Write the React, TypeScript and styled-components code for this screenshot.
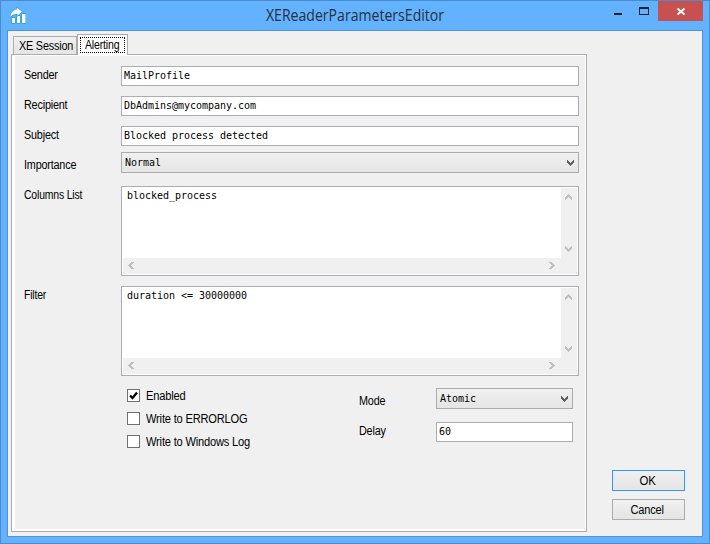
import React from "react";
import styled, { createGlobalStyle } from "styled-components";

const Global = createGlobalStyle`
  *, *::before, *::after { box-sizing: border-box; }
  html, body { margin: 0; padding: 0; overflow: hidden; }
  body { font-family: "Liberation Sans", Arial, sans-serif; font-size: 12px; color: #000; }
`;

const Window = styled.div`
  width: 710px;
  height: 544px;
  display: flex;
  flex-direction: column;
  background: #63b2ff;
  border: 1px solid #4b8bc9;
  padding: 0 6px 6px;
`;

const TitleBar = styled.header`
  height: 29px;
  flex: none;
  display: grid;
  grid-template-columns: 88px 1fr 88px;
  align-items: start;
`;

const AppIcon = styled.svg`
  display: block;
  margin: 6px 0 0 3px;
`;

const Title = styled.h1`
  margin: 0;
  text-align: center;
  font: 400 16px/29px "Open Sans", "Noto Sans", sans-serif;
  color: #23303c;
  white-space: nowrap;
  transform: scaleX(0.88);
`;

const WindowButtons = styled.div`
  display: grid;
  grid-template-columns: 24px 27px 45px;
  margin-left: -8px;
  width: 96px;
  height: 20px;
`;

const WindowButton = styled.button<{ $close?: boolean }>`
  border: 0;
  padding: 0;
  height: 20px;
  background: ${(p) => (p.$close ? "#c75050" : "transparent")};
  svg { display: block; margin: 0 auto; }
`;

const Client = styled.main`
  flex: 1;
  display: flex;
  background: #f0f0f0;
  border: 1px solid #4f94d8;
  padding: 3px 0 0 3px;
`;

const Tabs = styled.section`
  width: 576px;
`;

const TabStrip = styled.div`
  display: flex;
  align-items: flex-end;
  height: 20px;
  padding-left: 2px;
`;

const Tab = styled.button<{ $active?: boolean }>`
  font: inherit;
  display: flex;
  border: 1px solid #acacac;
  border-bottom: 0;
  padding: ${(p) => (p.$active ? "2px" : "0 0 0 5px")};
  width: ${(p) => (p.$active ? "51px" : "64px")};
  height: ${(p) => (p.$active ? "21px" : "18px")};
  margin-bottom: ${(p) => (p.$active ? "-1px" : "0")};
  background: ${(p) => (p.$active ? "#fff" : "linear-gradient(#f0f0f0, #e5e5e5)")};
  line-height: ${(p) => (p.$active ? "14px" : "18px")};
`;

const FocusRing = styled.span`
  display: flex;
  padding-left: 4px;
  width: 45px;
  height: 16px;
  border: 1px dotted #000;
`;

const TabPage = styled.div`
  height: 478px;
  background: #f0f0f0;
  border: 1px solid #acacac;
  box-shadow: inset 3px 0 #fff, inset -1px 0 #fff, inset 0 1px #fff, inset 0 -2px #fff;
  padding: 11px 7px 0 12px;
`;

const Row = styled.div<{ $gap: number; $h: number }>`
  display: grid;
  grid-template-columns: 97px 458px;
  height: ${(p) => p.$h}px;
  margin-bottom: ${(p) => p.$gap}px;
`;

const Label = styled.label<{ $drop?: number }>`
  line-height: 18px;
  padding-top: ${(p) => p.$drop ?? 0}px;
  height: 18px;
`;

const Fitted = styled.span<{ $scale: number; $space: number }>`
  display: inline-block;
  white-space: nowrap;
  transform: scaleX(${(p) => p.$scale});
  transform-origin: 0 50%;
  letter-spacing: ${(p) => p.$space}px;
`;

const mono = `font: 10px/12px "DejaVu Sans Mono", monospace; letter-spacing: -0.02px; color: #000;`;

const TextField = styled.input`
  ${mono}
  width: 100%;
  height: 20px;
  border: 1px solid #abadb3;
  border-radius: 0;
  background: #fff;
  padding: 0 2px 1px;
  outline: none;
`;

const Combo = styled.div`
  ${mono}
  width: 100%;
  height: 21px;
  border: 1px solid #acacac;
  background: linear-gradient(#f0f0f0, #e5e5e5);
  display: flex;
  justify-content: space-between;
  align-items: center;
  padding: 0 4px 0 3px;
`;

const Memo = styled.div`
  height: 90px;
  border: 1px solid #abadb3;
  background: #fff;
  padding: 1px;
  display: grid;
  grid-template-columns: 438px 16px;
  grid-template-rows: 70px 16px;
`;

const MemoText = styled.div`
  ${mono}
  padding: 2px 0 0 4px;
`;

const VBar = styled.div`
  background: #f0f0f0;
  display: flex;
  flex-direction: column;
  justify-content: space-between;
  align-items: center;
  padding: 6px 0 6px;
  svg { margin-right: 1px; }
`;

const HBar = styled.div`
  background: #f0f0f0;
  display: flex;
  justify-content: space-between;
  align-items: center;
  padding: 0 6px 1px 5px;
`;

const Corner = styled.div`
  background: #f0f0f0;
`;

const Options = styled.div`
  display: grid;
  grid-template-columns: 232px 77px 137px;
  padding: 12px 0 0 103px;
`;

const CheckList = styled.div`
  display: flex;
  flex-direction: column;
  gap: 10px;
  padding-top: 1px;
`;

const CheckItem = styled.label`
  display: flex;
  gap: 6px;
  height: 13px;
  line-height: 14px;
`;

const Box = styled.span`
  width: 13px;
  height: 13px;
  flex: none;
  border: 1px solid #707070;
  background: #fff;
  svg { display: block; }
`;

const Stack = styled.div<{ $gap: number; $top?: number }>`
  display: flex;
  flex-direction: column;
  gap: ${(p) => p.$gap}px;
  padding-top: ${(p) => p.$top ?? 0}px;
`;

const Actions = styled.aside`
  display: flex;
  flex-direction: column;
  gap: 8px;
  padding: 436px 0 0 25px;
`;

const Button = styled.button<{ $primary?: boolean }>`
  font: inherit;
  width: 73px;
  height: 21px;
  padding: 0 2px 0 0;
  display: flex;
  justify-content: center;
  line-height: 20px;
  border: 1px solid ${(p) => (p.$primary ? "#3399ff" : "#acacac")};
  background: linear-gradient(#f0f0f0, #e5e5e5);
  span { transform-origin: 50% 50%; }
`;

type Dir = "up" | "down" | "left" | "right";
const shapes: Record<Dir, string> = {
  down: "M0 0h1v1h1v1h1v1h1v-1h1v-1h1v-1h1v3h-1v1h-1v1h-1v1h-1v-1h-1v-1h-1v-1h-1z",
  up: "M3 0h1v1h1v1h1v1h1v3h-1v-1h-1v-1h-1v-1h-1v1h-1v1h-1v1h-1v-3h1v-1h1v-1h1z",
  left: "M3 0h3v1h-1v1h-1v1h-1v1h1v1h1v1h1v1h-3v-1h-1v-1h-1v-1h-1v-1h1v-1h1v-1h1z",
  right: "M0 0h3v1h1v1h1v1h1v1h-1v1h-1v1h-1v1h-3v-1h1v-1h1v-1h1v-1h-1v-1h-1v-1h-1z",
};

function Chevron({ dir, color = "#bfbfbf" }: { dir: Dir; color?: string }) {
  const vertical = dir === "up" || dir === "down";
  return (
    <svg width={vertical ? 7 : 6} height={vertical ? 6 : 7} fill={color} shapeRendering="crispEdges">
      <path d={shapes[dir]} />
    </svg>
  );
}

function T({ children, s = 0.9, l = -0.2 }: { children: string; s?: number; l?: number }) {
  return <Fitted $scale={s} $space={l}>{children}</Fitted>;
}

function MemoBox({ text }: { text: string }) {
  return (
    <Memo>
      <MemoText>{text}</MemoText>
      <VBar><Chevron dir="up" /><Chevron dir="down" /></VBar>
      <HBar><Chevron dir="left" /><Chevron dir="right" /></HBar>
      <Corner />
    </Memo>
  );
}

function Select({ value }: { value: string }) {
  return <Combo>{value}<Chevron dir="down" color="#606060" /></Combo>;
}

function Check({ text, checked }: { text: string; checked?: boolean }) {
  return (
    <CheckItem>
      <Box>
        {checked && (
          <svg width="11" height="11" fill="none" stroke="#000" strokeWidth="2.2">
            <path d="M2 5.5 4.5 8 9 2.5" />
          </svg>
        )}
      </Box>
      <T s={0.925}>{text}</T>
    </CheckItem>
  );
}

export default function App() {
  return (
    <>
      <Global />
      <Window>
        <TitleBar>
          <AppIcon width="16" height="17" viewBox="0 0 16 17">
            <g fill="#fff" stroke="#26a3dc" strokeWidth="1.4" paintOrder="stroke" strokeLinejoin="round">
              <path d="M2 11h3v5h-3zM7 9h3v7h-3zM12 7h3.500v9h-3.500z" />
              <path d="M.3 10C.8 6 3 3.200 6.800 2.600V.7L12 4.500 7.500 8.700V6.800C4.500 6.800 2.200 7.800 .3 10z" />
            </g>
          </AppIcon>
          <Title>XEReaderParametersEditor</Title>
          <WindowButtons>
            <WindowButton aria-label="Minimize">
              <svg width="24" height="20"><path d="M7 12h8v2H7z" fill="#222" /></svg>
            </WindowButton>
            <WindowButton aria-label="Maximize">
              <svg width="27" height="20">
                <path d="M8 6h10v8H8zM9 8v5h8V8z" fill="#222" fillRule="evenodd" />
              </svg>
            </WindowButton>
            <WindowButton $close aria-label="Close">
              <svg width="45" height="20" stroke="#fff" strokeWidth="1.9">
                <path d="M19.500 7.500 26.500 13.500M26.500 7.500 19.500 13.500" />
              </svg>
            </WindowButton>
          </WindowButtons>
        </TitleBar>
        <Client>
          <Tabs>
            <TabStrip>
              <Tab><T s={0.9}>XE Session</T></Tab>
              <Tab $active><FocusRing><T s={0.88}>Alerting</T></FocusRing></Tab>
            </TabStrip>
            <TabPage>
              <Row $h={20} $gap={10}><Label><T>Sender</T></Label><TextField defaultValue="MailProfile" /></Row>
              <Row $h={20} $gap={10}><Label><T>Recipient</T></Label><TextField defaultValue="DbAdmins@mycompany.com" /></Row>
              <Row $h={20} $gap={6}><Label><T>Subject</T></Label><TextField defaultValue="Blocked process detected" /></Row>
              <Row $h={21} $gap={13}><Label $drop={4}><T>Importance</T></Label><Select value="Normal" /></Row>
              <Row $h={90} $gap={10}><Label><T s={0.87}>Columns List</T></Label><MemoBox text="blocked_process" /></Row>
              <Row $h={90} $gap={0}><Label><T s={0.87}>Filter</T></Label><MemoBox text="duration <= 30000000" /></Row>
              <Options>
                <CheckList>
                  <Check text="Enabled" checked />
                  <Check text="Write to ERRORLOG" />
                  <Check text="Write to Windows Log" />
                </CheckList>
                <Stack $gap={12} $top={4}>
                  <Label><T>Mode</T></Label>
                  <Label><T>Delay</T></Label>
                </Stack>
                <Stack $gap={13}>
                  <Select value="Atomic" />
                  <TextField defaultValue="60" />
                </Stack>
              </Options>
            </TabPage>
          </Tabs>
          <Actions>
            <Button $primary><T s={0.95} l={0}>OK</T></Button>
            <Button><T s={0.92}>Cancel</T></Button>
          </Actions>
        </Client>
      </Window>
    </>
  );
}
